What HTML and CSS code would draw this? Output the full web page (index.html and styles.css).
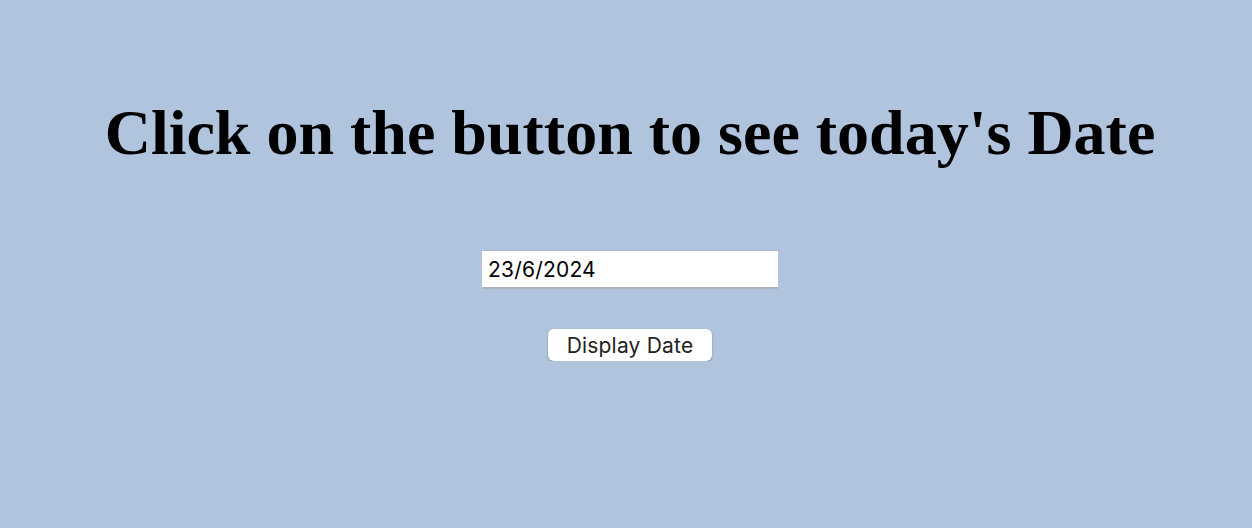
FILE: index.html
```html
<!DOCTYPE html>
<html>
<head>
<meta charset="utf-8">
<link rel="stylesheet" href="styles.css">
</head>
<body>
<main class="page">
  <h1 class="title">Click on the button to see today's Date</h1>
  <input class="date-field" type="text" value="23/6/2024">
  <button class="show-btn" type="button">Display Date</button>
</main>
</body>
</html>
```
FILE: styles.css
```css
html, body {
  margin: 0;
  padding: 0;
  background: #b0c4de;
}
.page {
  display: flex;
  flex-direction: column;
  align-items: center;
  padding-top: 93px;
  padding-left: 8px;
}
.title {
  margin: 0;
  font-family: "Liberation Serif", "Times New Roman", serif;
  font-weight: bold;
  font-size: 64px;
  line-height: 80px;
  color: #000;
}
.date-field {
  margin-top: 77px;
  box-sizing: border-box;
  width: 296px;
  height: 39px;
  padding: 0 6px;
  border: none;
  border-top: 1px solid #a8bcd8;
  border-bottom: 2px solid #a9b3c0;
  background: #fff;
  font-family: Inter, "Liberation Sans", Arial, sans-serif;
  font-size: 21px;
  letter-spacing: 0.2px;
  color: #000;
  outline: none;
}
.show-btn {
  margin-top: 40px;
  box-sizing: border-box;
  width: 164px;
  height: 32px;
  padding: 0;
  border: none;
  border-radius: 6px;
  background: #fff;
  box-shadow: 0 1px 2px rgba(0, 0, 0, 0.3);
  font-family: Inter, "Liberation Sans", Arial, sans-serif;
  font-size: 21px;
  letter-spacing: 0.2px;
  color: #222;
}
```
